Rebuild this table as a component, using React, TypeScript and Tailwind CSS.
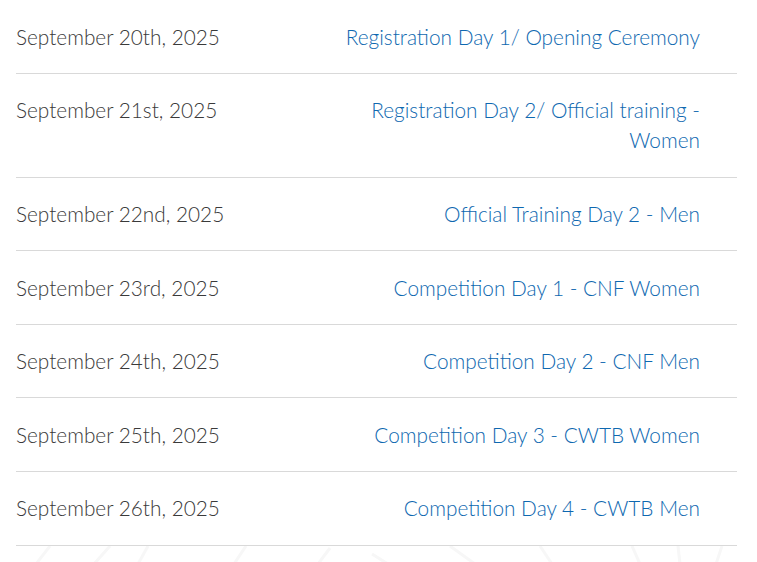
import React from "react";

const rows: [string, string][] = [
  ["September 20th, 2025", "Registration Day 1/ Opening Ceremony"],
  ["September 21st, 2025", "Registration Day 2/ Official training - Women"],
  ["September 22nd, 2025", "Official Training Day 2 - Men"],
  ["September 23rd, 2025", "Competition Day 1 - CNF Women"],
  ["September 24th, 2025", "Competition Day 2 - CNF Men"],
  ["September 25th, 2025", "Competition Day 3 - CWTB Women"],
  ["September 26th, 2025", "Competition Day 4 - CWTB Men"],
];

export default function App() {
  return (
    <div
      className="w-[757px] h-[562px] overflow-hidden bg-white"
      style={{ fontFamily: "Lato, 'Open Sans', sans-serif" }}
    >
      <div className="mx-[16px] w-[721px] pt-[0.5px]">
        {rows.map(([d, e], i) => (
          <div
            key={i}
            className="flex justify-between border-b border-[#d9d9d9] py-[21.3px] text-[20.8px] leading-[30px] font-light"
          >
            <div className="text-[#3a3a3a] whitespace-nowrap">{d}</div>
            <div className="w-[372px] mr-[37px] text-right text-[#0e68b0]">
              {e}
            </div>
          </div>
        ))}
      </div>
      <svg width="757" height="18" className="block">
        <g stroke="#f7f7f7" strokeWidth="3" fill="none">
          <path d="M50 0 L36 18" />
          <path d="M110 0 L94 18" />
          <path d="M148 0 L138 18" />
          <path d="M246 0 L234 18" />
          <path d="M330 2 L318 18" />
          <path d="M372 8 L388 18" />
          <path d="M450 0 L475 18" />
          <path d="M540 0 L552 18" />
          <path d="M632 0 L640 18" />
          <path d="M678 0 L680 18" />
          <path d="M722 0 L716 18" />
        </g>
      </svg>
    </div>
  );
}
